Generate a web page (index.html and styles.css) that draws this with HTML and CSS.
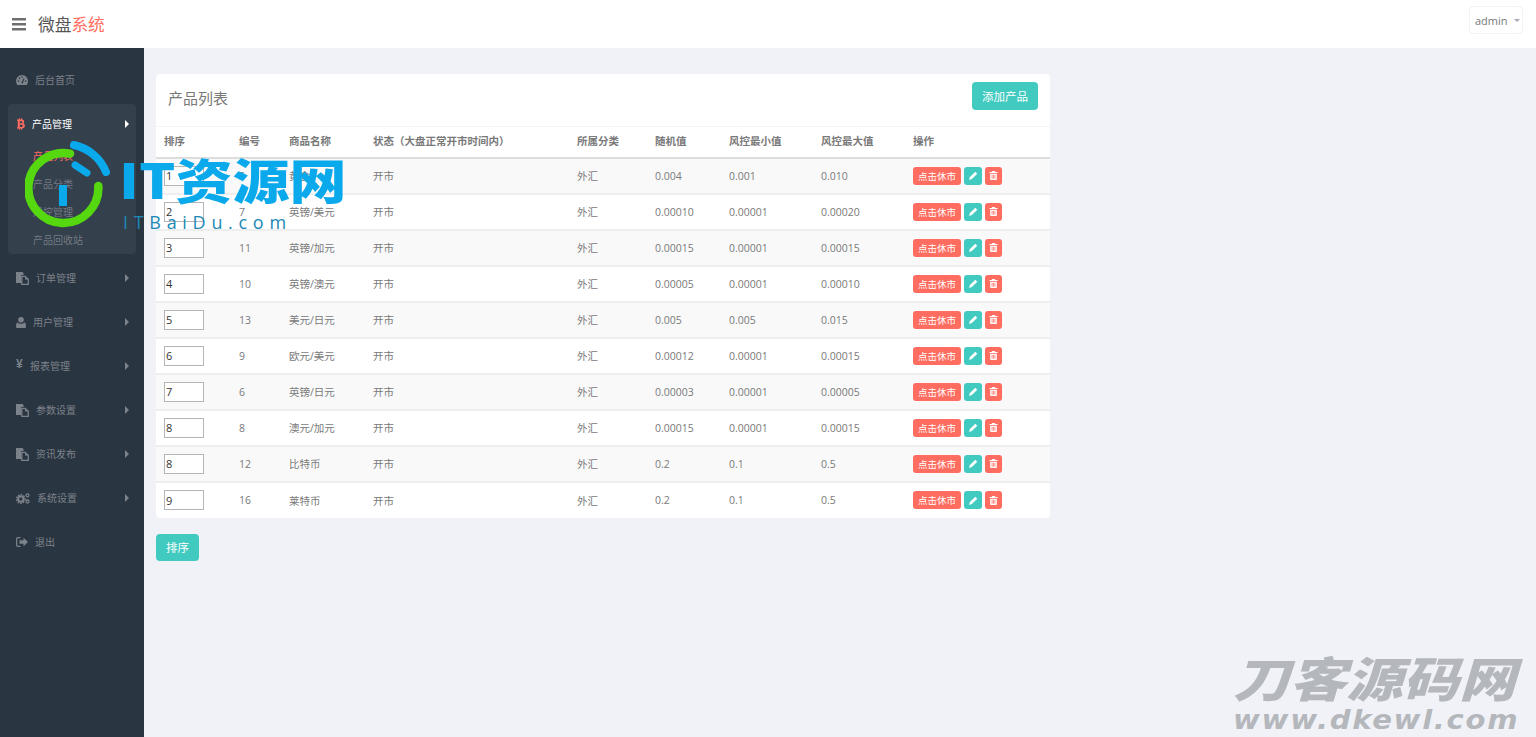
FILE: index.html
```html
<!DOCTYPE html>
<html lang="zh">
<head>
<meta charset="utf-8">
<title>微盘系统</title>
<link rel="stylesheet" href="styles.css">
</head>
<body>
<svg class="defs" width="0" height="0">
  <symbol id="i-copy" viewBox="0 0 13 13"><path d="M0 0h6.500l1 1v2H5v8H0z" fill="currentColor"/><path d="M5.800 4.300h3.400l3.100 3v5H5.800z" fill="none" stroke="currentColor" stroke-width="1.300"/><path d="M9 4.500v3h3z" fill="currentColor"/></symbol>
  <symbol id="i-tri" viewBox="0 0 4 8"><path d="M0 0l4 4-4 4z" fill="currentColor"/></symbol>
  <symbol id="i-pen" viewBox="0 0 10 10"><path d="M7 .8 9.200 3 3.200 9 0 10 1 6.800z" fill="currentColor"/></symbol>
  <symbol id="i-bin" viewBox="0 0 10 10"><path d="M3.500 0h3l.5 1.200h2.500v1H.5v-1H3zM1.300 3h7.400v5.800c0 .7-.5 1.200-1.100 1.200H2.400c-.6 0-1.100-.5-1.100-1.200zM3 4.200v4.500h.8V4.200zm1.600 0v4.500h.8V4.200zm1.600 0v4.500H7V4.200z" fill="currentColor" fill-rule="evenodd"/></symbol>
</svg>
<header class="topbar">
  <svg class="burger" viewBox="0 0 14 13"><path d="M0 0h14v2.500H0zM0 5h14v2.500H0zM0 10h14v2.500H0z" fill="#6f6f6f"/></svg>
  <div class="brand">微盘<span class="brand-accent">系统</span></div>
  <div class="user">admin<span class="caret"></span></div>
</header>
<div class="shell">
  <nav class="sidebar">
    <a class="nav-item">
      <svg class="ic w12" viewBox="0 0 12 10"><path d="M6 0a6 6 0 0 1 6 6c0 1.500-.4 2.800-1.200 4H1.200C.4 8.800 0 7.500 0 6a6 6 0 0 1 6-6z" fill="currentColor"/><circle cx="2.300" cy="6" r=".8" fill="#2a3542"/><circle cx="3.500" cy="3.200" r=".8" fill="#2a3542"/><circle cx="6" cy="2" r=".8" fill="#2a3542"/><circle cx="9.700" cy="6" r=".8" fill="#2a3542"/><path d="M5.300 8 7.800 3.200l.6.3L6.700 8.400z" fill="#2a3542"/></svg>
      <span class="label">后台首页</span>
    </a>
    <div class="nav-group">
      <a class="nav-item nav-head">
        <svg class="ic bitcoin" viewBox="0 0 7 10"><path d="M1.500 0h1v1h1V0h1v1.100c1.200.3 1.800 1 1.800 2 0 .7-.3 1.200-.9 1.500.9.300 1.500 1 1.500 2 0 1.300-.9 2.100-2.400 2.300V10h-1V9h-1v1h-1V9H0V7.800h.7V2.200H0V1h1.500zM2.400 2.500v1.800h1.300c.6 0 1-.3 1-.9s-.4-.9-1-.9zm0 3.100v2h1.600c.7 0 1.100-.4 1.100-1s-.4-1-1.100-1z" fill="currentColor" fill-rule="evenodd"/></svg>
        <span class="label">产品管理</span>
        <svg class="tri"><use href="#i-tri"/></svg>
      </a>
      <ul class="sub">
        <li class="sub-active">产品列表</li>
        <li>产品分类</li>
        <li>风控管理</li>
        <li>产品回收站</li>
      </ul>
    </div>
    <a class="nav-item"><svg class="ic w13"><use href="#i-copy"/></svg><span class="label">订单管理</span><svg class="tri"><use href="#i-tri"/></svg></a>
    <a class="nav-item">
      <svg class="ic w10" viewBox="0 0 10 11"><circle cx="5" cy="2.800" r="2.800" fill="currentColor"/><path d="M1.500 5.300C2.300 6.300 3.500 6.800 5 6.800s2.700-.5 3.500-1.500C9.500 5.900 10 7.500 10 9.400 10 10.400 9.300 11 8.400 11H1.600C.7 11 0 10.400 0 9.400 0 7.500.5 5.900 1.500 5.300z" fill="currentColor"/></svg>
      <span class="label">用户管理</span><svg class="tri"><use href="#i-tri"/></svg>
    </a>
    <a class="nav-item"><span class="yen">¥</span><span class="label">报表管理</span><svg class="tri"><use href="#i-tri"/></svg></a>
    <a class="nav-item"><svg class="ic w13"><use href="#i-copy"/></svg><span class="label">参数设置</span><svg class="tri"><use href="#i-tri"/></svg></a>
    <a class="nav-item"><svg class="ic w13"><use href="#i-copy"/></svg><span class="label">资讯发布</span><svg class="tri"><use href="#i-tri"/></svg></a>
    <a class="nav-item">
      <svg class="ic w14" viewBox="0 0 14 11"><circle cx="4.800" cy="6" r="2.700" fill="none" stroke="currentColor" stroke-width="2"/><circle cx="4.800" cy="6" r="4.300" fill="none" stroke="currentColor" stroke-width="1.200" stroke-dasharray="1.700 1.100"/><circle cx="11.500" cy="2.300" r="1.500" fill="none" stroke="currentColor" stroke-width="1.300"/><circle cx="11.500" cy="8.500" r="1.500" fill="none" stroke="currentColor" stroke-width="1.300"/></svg>
      <span class="label">系统设置</span><svg class="tri"><use href="#i-tri"/></svg>
    </a>
    <a class="nav-item">
      <svg class="ic w12" viewBox="0 0 12 10"><path d="M4.500 0H2C.9 0 0 .9 0 2v6c0 1.100.9 2 2 2h2.500V8.800H2c-.4 0-.8-.4-.8-.8V2c0-.4.4-.8.800-.8h2.500z" fill="currentColor"/><path d="M3.500 3.300h4V.8L12 5 7.500 9.200V6.700h-4z" fill="currentColor"/></svg>
      <span class="label">退出</span>
    </a>
  </nav>
  <main class="content">
    <section class="card">
      <div class="card-head">
        <h2 class="card-title">产品列表</h2>
        <button class="btn btn-teal">添加产品</button>
      </div>
      <table class="grid">
        <colgroup>
          <col class="c1"><col class="c2"><col class="c3"><col class="c4"><col class="c5"><col class="c6"><col class="c7"><col class="c8"><col>
        </colgroup>
        <thead>
          <tr><th>排序</th><th>编号</th><th>商品名称</th><th>状态（大盘正常开市时间内）</th><th>所属分类</th><th>随机值</th><th>风控最小值</th><th>风控最大值</th><th>操作</th></tr>
        </thead>
        <tbody>
          <tr><td><input class="order" value="1"></td><td>5</td><td>黄金</td><td>开市</td><td>外汇</td><td>0.004</td><td>0.001</td><td>0.010</td><td class="ops"><button class="mini red">点击休市</button><button class="mini sq teal"><svg class="bi"><use href="#i-pen"/></svg></button><button class="mini sq red"><svg class="bi"><use href="#i-bin"/></svg></button></td></tr>
          <tr><td><input class="order" value="2"></td><td>7</td><td>英镑/美元</td><td>开市</td><td>外汇</td><td>0.00010</td><td>0.00001</td><td>0.00020</td><td class="ops"><button class="mini red">点击休市</button><button class="mini sq teal"><svg class="bi"><use href="#i-pen"/></svg></button><button class="mini sq red"><svg class="bi"><use href="#i-bin"/></svg></button></td></tr>
          <tr><td><input class="order" value="3"></td><td>11</td><td>英镑/加元</td><td>开市</td><td>外汇</td><td>0.00015</td><td>0.00001</td><td>0.00015</td><td class="ops"><button class="mini red">点击休市</button><button class="mini sq teal"><svg class="bi"><use href="#i-pen"/></svg></button><button class="mini sq red"><svg class="bi"><use href="#i-bin"/></svg></button></td></tr>
          <tr><td><input class="order" value="4"></td><td>10</td><td>英镑/澳元</td><td>开市</td><td>外汇</td><td>0.00005</td><td>0.00001</td><td>0.00010</td><td class="ops"><button class="mini red">点击休市</button><button class="mini sq teal"><svg class="bi"><use href="#i-pen"/></svg></button><button class="mini sq red"><svg class="bi"><use href="#i-bin"/></svg></button></td></tr>
          <tr><td><input class="order" value="5"></td><td>13</td><td>美元/日元</td><td>开市</td><td>外汇</td><td>0.005</td><td>0.005</td><td>0.015</td><td class="ops"><button class="mini red">点击休市</button><button class="mini sq teal"><svg class="bi"><use href="#i-pen"/></svg></button><button class="mini sq red"><svg class="bi"><use href="#i-bin"/></svg></button></td></tr>
          <tr><td><input class="order" value="6"></td><td>9</td><td>欧元/美元</td><td>开市</td><td>外汇</td><td>0.00012</td><td>0.00001</td><td>0.00015</td><td class="ops"><button class="mini red">点击休市</button><button class="mini sq teal"><svg class="bi"><use href="#i-pen"/></svg></button><button class="mini sq red"><svg class="bi"><use href="#i-bin"/></svg></button></td></tr>
          <tr><td><input class="order" value="7"></td><td>6</td><td>英镑/日元</td><td>开市</td><td>外汇</td><td>0.00003</td><td>0.00001</td><td>0.00005</td><td class="ops"><button class="mini red">点击休市</button><button class="mini sq teal"><svg class="bi"><use href="#i-pen"/></svg></button><button class="mini sq red"><svg class="bi"><use href="#i-bin"/></svg></button></td></tr>
          <tr><td><input class="order" value="8"></td><td>8</td><td>澳元/加元</td><td>开市</td><td>外汇</td><td>0.00015</td><td>0.00001</td><td>0.00015</td><td class="ops"><button class="mini red">点击休市</button><button class="mini sq teal"><svg class="bi"><use href="#i-pen"/></svg></button><button class="mini sq red"><svg class="bi"><use href="#i-bin"/></svg></button></td></tr>
          <tr><td><input class="order" value="8"></td><td>12</td><td>比特币</td><td>开市</td><td>外汇</td><td>0.2</td><td>0.1</td><td>0.5</td><td class="ops"><button class="mini red">点击休市</button><button class="mini sq teal"><svg class="bi"><use href="#i-pen"/></svg></button><button class="mini sq red"><svg class="bi"><use href="#i-bin"/></svg></button></td></tr>
          <tr><td><input class="order" value="9"></td><td>16</td><td>莱特币</td><td>开市</td><td>外汇</td><td>0.2</td><td>0.1</td><td>0.5</td><td class="ops"><button class="mini red">点击休市</button><button class="mini sq teal"><svg class="bi"><use href="#i-pen"/></svg></button><button class="mini sq red"><svg class="bi"><use href="#i-bin"/></svg></button></td></tr>
        </tbody>
      </table>
    </section>
    <button class="btn btn-teal btn-sort">排序</button>
  </main>
</div>

<div class="mark-it">
  <svg class="mark-logo" viewBox="0 0 110 100">
    <path d="M45 12.600A35 35 0 1 0 73.300 45" fill="none" stroke="#55d80f" stroke-width="8.500" stroke-linecap="round"/>
    <path d="M49 4A45 45 0 0 1 81 31" fill="none" stroke="#0aa9ec" stroke-width="8" stroke-linecap="round"/>
    <path d="M50 24 62 32" fill="none" stroke="#0aa9ec" stroke-width="7" stroke-linecap="round"/>
    <path d="M34 44h8v21h-8z" fill="#0aa9ec"/>
  </svg>
  <div class="mark-title">IT资源网</div>
  <div class="mark-sub">ITBaiDu.com</div>
</div>
<div class="mark-dk">
  <div class="dk-title">刀客源码网</div>
  <div class="dk-sub">www.dkewl.com</div>
</div>
</body>
</html>
```
FILE: styles.css
```css
* { box-sizing: border-box; }
html, body { margin: 0; height: 100%; overflow: hidden; }
body {
  font-family: "Open Sans", "Noto Sans CJK SC", sans-serif;
  font-size: 10.5px;
  color: #797979;
  background: #f0f2f7;
}
.defs { position: absolute; }

.topbar {
  height: 48px;
  background: #fff;
  display: flex;
  align-items: center;
  padding: 0 13px 0 12px;
}
.burger { width: 14px; height: 13px; margin-right: 12px; }
.brand { font-size: 16.7px; color: #555; }
.brand-accent { color: #ff6c60; }
.user {
  margin-left: auto;
  width: 54px;
  height: 28px;
  margin-top: -8px;
  border: 1px solid #f3f3f3;
  border-radius: 4px;
  display: flex;
  align-items: center;
  padding-left: 5px;
  font-size: 11px;
  color: #777;
}
.caret {
  margin-left: 6px;
  border-top: 3px solid #a9a9b5;
  border-left: 3.500px solid transparent;
  border-right: 3.500px solid transparent;
}

.shell { display: flex; height: 689px; }
.sidebar {
  width: 144px;
  flex: none;
  background: #2a3542;
  padding-top: 10px;
  color: #7c8289;
}
.nav-item {
  height: 44px;
  display: flex;
  align-items: center;
  gap: 7px;
  padding: 0 15px 0 16px;
  font-size: 10px;
}
.label { margin-top: -2px; }
.ic { flex: none; }
.w10 { width: 10px; height: 11px; }
.w12 { width: 12px; height: 10px; }
.w13 { width: 13px; height: 13px; }
.w14 { width: 14px; height: 11px; }
.yen { width: 7px; font-size: 12px; line-height: 1; margin-top: -4px; font-family: "Liberation Sans", sans-serif; font-weight: bold; }
.tri { width: 4px; height: 8px; margin-left: auto; }
.nav-group {
  margin: 2px 8px;
  background: #35404d;
  border-radius: 4px;
  height: 150px;
}
.nav-head {
  height: 38px;
  padding: 2px 7px 0 9px;
  color: #fff;
}
.bitcoin { width: 8px; height: 12px; color: #ff6c60; }
.sub { list-style: none; margin: 0; padding: 0 0 0 25px; font-size: 10px; color: #737a82; }
.sub li { height: 28px; line-height: 28px; }
.sub .sub-active { color: #ff6c60; }

.content { flex: 1; padding: 26px 12px 0; }
.card {
  width: 894px;
  background: #fff;
  border-radius: 4px;
  overflow: hidden;
}
.card-head {
  height: 52px;
  display: flex;
  align-items: center;
  justify-content: space-between;
  padding: 0 12px;
}
.card-title { margin: -6px 0 0; font-size: 15px; font-weight: 400; color: #797979; }
.btn {
  border: 0;
  border-radius: 4px;
  font-family: inherit;
  font-size: 11.500px;
  color: #fff;
  height: 28px;
  padding: 0;
}
.btn-teal { background: #41cac0; width: 66px; margin-top: -8px; }
.btn-sort { display: block; width: 43px; height: 27px; margin-top: 16px; }

.grid { width: 894px; border-collapse: collapse; table-layout: fixed; }
.c1 { width: 75px; } .c2 { width: 50px; } .c3 { width: 84px; } .c4 { width: 204px; }
.c5 { width: 78px; } .c6 { width: 74px; } .c7 { width: 92px; } .c8 { width: 92px; }
.grid th {
  height: 31px;
  padding: 0 0 2px 8px;
  text-align: left;
  font-weight: 700;
  font-size: 10.500px;
  border-top: 1px solid #f5f5f5;
  border-bottom: 2px solid #ddd;
}
.grid td {
  height: 36px;
  padding: 0 0 0 8px;
  border-top: 2px solid #eee;
}
.grid tbody tr:first-child td { border-top: 0; }
.grid tbody tr:nth-child(odd) { background: #f9f9f9; }
.order {
  display: block;
  width: 40px;
  height: 20px;
  padding: 0 1px;
  border: 1px solid #b5b5b5;
  background: #fff;
  font-family: inherit;
  font-size: 11px;
  color: #333;
}
.ops { white-space: nowrap; }
.mini {
  display: inline-flex;
  align-items: center;
  justify-content: center;
  vertical-align: middle;
  width: 48px;
  height: 18px;
  border: 0;
  border-radius: 3px;
  padding: 0;
  margin-right: 3px;
  color: #fff;
  font-family: inherit;
  font-size: 9.500px;
}
.mini.sq { width: 18px; }
.mini.sq.red { width: 17px; }
.red { background: #ff6c60; }
.teal { background: #41cac0; }
.bi { width: 9px; height: 9px; }

.mark-it { position: absolute; left: 0; top: 0; width: 350px; height: 240px; pointer-events: none; }
.mark-logo { position: absolute; left: 25px; top: 141px; width: 110px; height: 100px; }
.mark-title {
  position: absolute;
  left: 119px;
  top: 149px;
  font-family: "Noto Sans CJK SC", sans-serif;
  font-weight: 900;
  font-size: 57px;
  line-height: 68px;
  color: #0aa9ec;
  white-space: nowrap;
  transform: scaleY(.84);
  transform-origin: left top;
}
.mark-sub {
  position: absolute;
  left: 123px;
  top: 211px;
  font-family: "Open Sans", sans-serif;
  font-size: 18px;
  line-height: 22px;
  letter-spacing: 5.700px;
  color: #2188b5;
  white-space: nowrap;
}
.mark-dk { position: absolute; left: 1233px; top: 650px; width: 296px; pointer-events: none; color: #b4b7bb; }
.dk-title {
  font-family: "Noto Sans CJK SC", sans-serif;
  font-weight: 900;
  font-style: italic;
  font-size: 56.500px;
  line-height: 62px;
  height: 54px;
  white-space: nowrap;
  transform: scaleY(.84);
  transform-origin: left top;
}
.dk-sub {
  margin-top: 1px;
  font-family: "DejaVu Sans", sans-serif;
  font-weight: 700;
  font-style: italic;
  font-size: 26px;
  line-height: 30px;
  letter-spacing: 1.500px;
  white-space: nowrap;
  transform: scaleX(1.12);
  transform-origin: left top;
}
```
